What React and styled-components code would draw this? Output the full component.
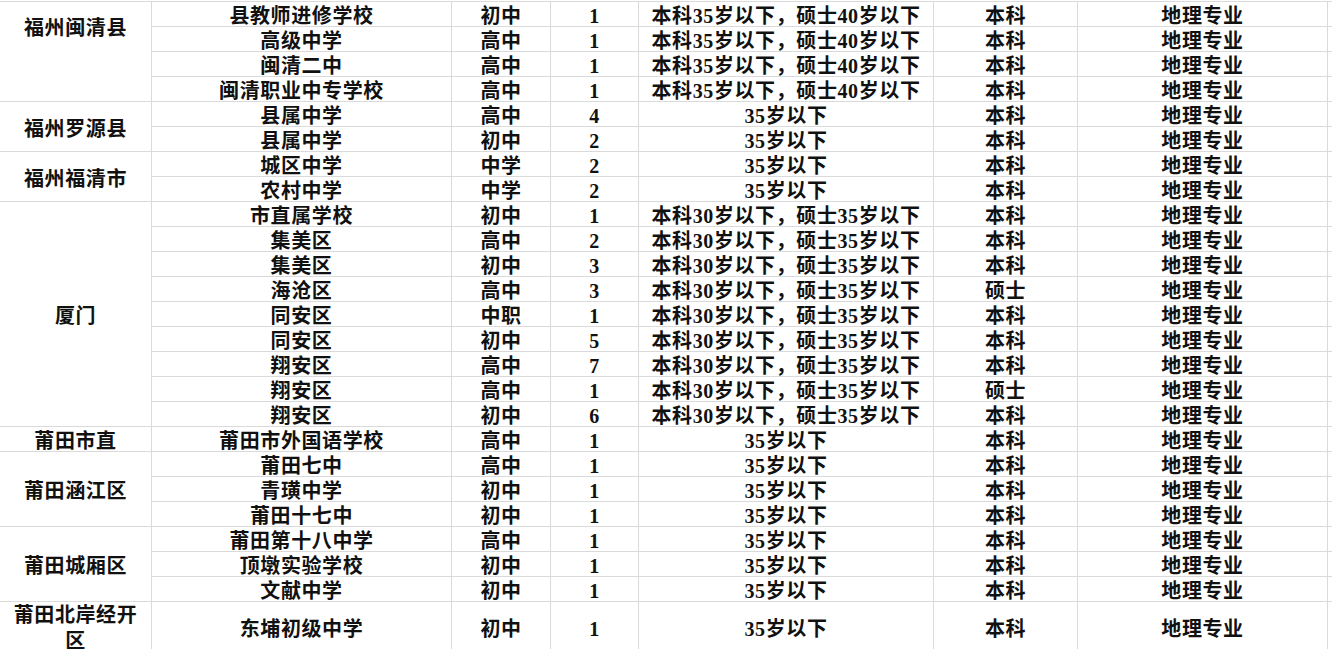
import styled, { createGlobalStyle } from 'styled-components'

const GlobalStyle = createGlobalStyle`
  html, body {
    margin: 0;
    padding: 0;
    overflow: hidden;
    background: #fff;
  }
  * {
    box-sizing: border-box;
  }
`

const LINE = '#dadada'

const Sheet = styled.div`
  display: flex;
  flex-direction: column;
  width: 1332px;
  margin-top: 1px;
  border-top: 1px solid ${LINE};
  font-family: "Liberation Serif", "Noto Sans CJK SC", serif;
  font-weight: 700;
  font-size: 20px;
  letter-spacing: 0.6px;
  color: #111;
`

const Group = styled.div`
  display: flex;
`

const Label = styled.div`
  width: 152px;
  flex-shrink: 0;
  display: flex;
  justify-content: center;
  align-items: ${props => (props.$top ? 'flex-start' : 'center')};
  padding: ${props => (props.$top ? '16px 10px 0' : props.$wrap ? '0 10px' : '4px 10px 0')};
  text-align: center;
  line-height: ${props => (props.$wrap ? '26px' : '20px')};
  border-right: 1px solid ${LINE};
  border-bottom: 1px solid ${LINE};
`

const Rows = styled.div`
  flex: 1;
  display: flex;
  flex-direction: column;
`

const Row = styled.div`
  display: grid;
  grid-template-columns: 300px 99px 88px 295px 144px 250px 1fr;
  height: ${props => (props.$tall ? '50px' : '25px')};
  border-bottom: 1px solid ${LINE};
`

const Cell = styled.div`
  display: flex;
  justify-content: center;
  align-items: center;
  padding-top: 4px;
  line-height: 20px;
  white-space: nowrap;
  border-right: 1px solid ${LINE};

  &:last-child {
    border-right: none;
  }
`

const A35 = '本科35岁以下，硕士40岁以下'
const A30 = '本科30岁以下，硕士35岁以下'
const Y35 = '35岁以下'

const groups = [
  {
    name: '福州闽清县',
    top: true,
    rows: [
      ['县教师进修学校', '初中', '1', A35, '本科'],
      ['高级中学', '高中', '1', A35, '本科'],
      ['闽清二中', '高中', '1', A35, '本科'],
      ['闽清职业中专学校', '高中', '1', A35, '本科'],
    ],
  },
  {
    name: '福州罗源县',
    rows: [
      ['县属中学', '高中', '4', Y35, '本科'],
      ['县属中学', '初中', '2', Y35, '本科'],
    ],
  },
  {
    name: '福州福清市',
    rows: [
      ['城区中学', '中学', '2', Y35, '本科'],
      ['农村中学', '中学', '2', Y35, '本科'],
    ],
  },
  {
    name: '厦门',
    rows: [
      ['市直属学校', '初中', '1', A30, '本科'],
      ['集美区', '高中', '2', A30, '本科'],
      ['集美区', '初中', '3', A30, '本科'],
      ['海沧区', '高中', '3', A30, '硕士'],
      ['同安区', '中职', '1', A30, '本科'],
      ['同安区', '初中', '5', A30, '本科'],
      ['翔安区', '高中', '7', A30, '本科'],
      ['翔安区', '高中', '1', A30, '硕士'],
      ['翔安区', '初中', '6', A30, '本科'],
    ],
  },
  {
    name: '莆田市直',
    rows: [['莆田市外国语学校', '高中', '1', Y35, '本科']],
  },
  {
    name: '莆田涵江区',
    rows: [
      ['莆田七中', '高中', '1', Y35, '本科'],
      ['青璜中学', '初中', '1', Y35, '本科'],
      ['莆田十七中', '初中', '1', Y35, '本科'],
    ],
  },
  {
    name: '莆田城厢区',
    rows: [
      ['莆田第十八中学', '高中', '1', Y35, '本科'],
      ['顶墩实验学校', '初中', '1', Y35, '本科'],
      ['文献中学', '初中', '1', Y35, '本科'],
    ],
  },
  {
    name: '莆田北岸经开区',
    tall: true,
    rows: [['东埔初级中学', '初中', '1', Y35, '本科']],
  },
]

const App = () => {
  return (
    <>
      <GlobalStyle />
      <Sheet>
        {groups.map(group => (
          <Group key={group.name}>
            <Label $top={group.top} $wrap={group.tall}>{group.name}</Label>
            <Rows>
              {group.rows.map((row, i) => (
                <Row key={i} $tall={group.tall}>
                  {row.map((value, j) => (
                    <Cell key={j}>{value}</Cell>
                  ))}
                  <Cell>地理专业</Cell>
                  <Cell />
                </Row>
              ))}
            </Rows>
          </Group>
        ))}
      </Sheet>
    </>
  )
}

export default App
